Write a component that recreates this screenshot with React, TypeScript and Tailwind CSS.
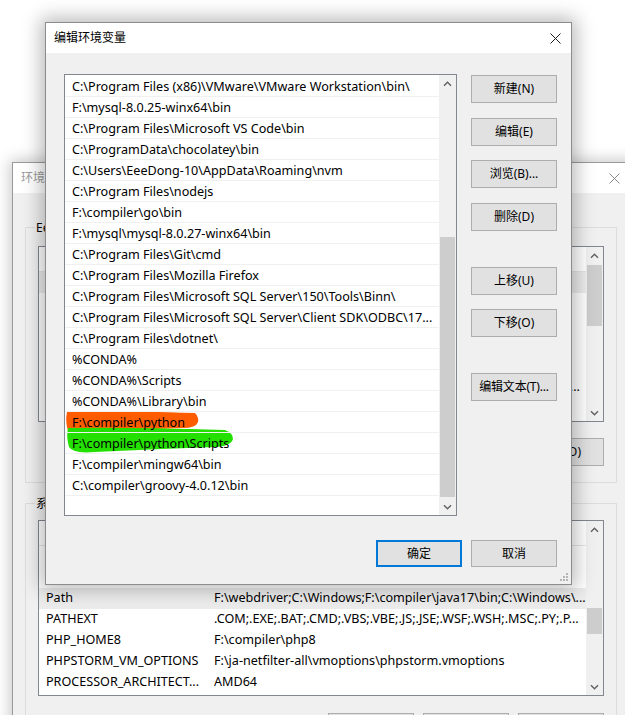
const editItems = [
    'C:\\Program Files (x86)\\VMware\\VMware Workstation\\bin\\',
    'F:\\mysql-8.0.25-winx64\\bin',
    'C:\\Program Files\\Microsoft VS Code\\bin',
    'C:\\ProgramData\\chocolatey\\bin',
    'C:\\Users\\EeeDong-10\\AppData\\Roaming\\nvm',
    'C:\\Program Files\\nodejs',
    'F:\\compiler\\go\\bin',
    'F:\\mysql\\mysql-8.0.27-winx64\\bin',
    'C:\\Program Files\\Git\\cmd',
    'C:\\Program Files\\Mozilla Firefox',
    'C:\\Program Files\\Microsoft SQL Server\\150\\Tools\\Binn\\',
    'C:\\Program Files\\Microsoft SQL Server\\Client SDK\\ODBC\\17...',
    'C:\\Program Files\\dotnet\\',
    '%CONDA%',
    '%CONDA%\\Scripts',
    '%CONDA%\\Library\\bin',
    'F:\\compiler\\python',
    'F:\\compiler\\python\\Scripts',
    'F:\\compiler\\mingw64\\bin',
    'C:\\compiler\\groovy-4.0.12\\bin',
];

// user variables sit behind the edit dialog; only the clipped tail of one value peeks out
const userVars: [string, string][] = [
    ['', ''],
    ['', ''],
    ['', ''],
    ['', ''],
    ['', ''],
    ['', '...'],
    ['', ''],
    ['', ''],
];

const sysVars: [string, string][] = [
    ['', ''],
    ['', ''],
    ['Path', 'F:\\webdriver;C:\\Windows;F:\\compiler\\java17\\bin;C:\\Windows\\...'],
    ['PATHEXT', '.COM;.EXE;.BAT;.CMD;.VBS;.VBE;.JS;.JSE;.WSF;.WSH;.MSC;.PY;.P...'],
    ['PHP_HOME8', 'F:\\compiler\\php8'],
    ['PHPSTORM_VM_OPTIONS', 'F:\\ja-netfilter-all\\vmoptions\\phpstorm.vmoptions'],
    ['PROCESSOR_ARCHITECT...', 'AMD64'],
];

function Chevron({ down = false }: { down?: boolean }) {
    return (
        <svg width="9" height="6" viewBox="0 0 9 6" className="text-[#606060]">
            <path d={down ? 'M1 1.2 L4.5 4.7 L8 1.2' : 'M1 4.8 L4.5 1.3 L8 4.8'} fill="none" stroke="currentColor" strokeWidth="1.4" />
        </svg>
    );
}

function ScrollBar({ thumb }: { thumb: string }) {
    return (
        <div className="flex w-[17px] shrink-0 flex-col bg-[#f0f0f0]">
            <div className="flex h-[17px] items-center justify-center">
                <Chevron />
            </div>
            <div className="flex-1">
                <div className={`mx-[1px] bg-[#cdcdcd] ${thumb}`} />
            </div>
            <div className="flex h-[17px] items-center justify-center">
                <Chevron down />
            </div>
        </div>
    );
}

function CloseX({ color }: { color: string }) {
    return (
        <svg width="11" height="11" viewBox="0 0 11 11" className={color}>
            <path d="M0.5 0.5 L10.5 10.5 M10.5 0.5 L0.5 10.5" stroke="currentColor" strokeWidth="1" />
        </svg>
    );
}

function WinButton({ label, className = '' }: { label: string; className?: string }) {
    return (
        <div className={`flex h-[28px] w-[86px] items-center justify-center border border-[#adadad] bg-[#e1e1e1] whitespace-nowrap ${className}`}>
            {label}
        </div>
    );
}

function VarList({ rows, selected, thumb }: { rows: [string, string][]; selected: number; thumb: string }) {
    return (
        <div className="flex h-[176px] border border-[#828790] bg-white">
            <div className="flex min-w-0 flex-1 flex-col overflow-hidden text-[12.6px]">
                <div className="h-[25px] shrink-0 border-b border-[#e5e5e5]" />
                {rows.map(([name, value], i) => (
                    <div key={i} className={`flex h-[21px] shrink-0 items-center ${i === selected ? 'bg-[#ececec]' : ''}`}>
                        <span className="w-[175px] shrink-0 overflow-hidden pl-[7px] whitespace-nowrap">{name}</span>
                        <span className={`min-w-0 flex-1 overflow-hidden whitespace-nowrap ${value === '...' ? 'pr-[6px] text-right' : ''}`}>{value}</span>
                    </div>
                ))}
            </div>
            <ScrollBar thumb={thumb} />
        </div>
    );
}

function BackgroundWindow() {
    return (
        <div className="absolute top-[162px] left-[12px] flex h-[600px] w-[640px] flex-col border border-[#9a9a9a] bg-[#f0f0f0] shadow-[0_0_14px_2px_rgba(0,0,0,0.22)]">
            <div className="flex h-[30px] shrink-0 items-center justify-between bg-white pr-[31px] pl-[8px] text-[#9a9a9a]">
                <span>环境变量</span>
                <CloseX color="text-[#8a8a8a]" />
            </div>

            <div className="relative mt-[34px] ml-[12px] w-[592px] border border-[#dcdcdc] px-[12px] pt-[18px] pb-[16px]">
                <span className="absolute -top-[9px] left-[9px] bg-[#f0f0f0] px-[1px]">Ee</span>
                <VarList rows={userVars} selected={0} thumb="mt-[1px] h-[61px]" />
                <div className="mt-[16px] flex justify-end gap-[9px]">
                    <WinButton label="" />
                    <WinButton label="" />
                    <WinButton label="删除(D)" />
                </div>
            </div>

            <div className="relative mt-[20px] ml-[12px] w-[592px] border border-[#dcdcdc] px-[12px] pt-[16px] pb-[16px]">
                <span className="absolute -top-[9px] left-[9px] bg-[#f0f0f0] px-[1px]">系</span>
                <VarList rows={sysVars} selected={2} thumb="mt-[70px] h-[26px]" />
                <div className="mt-[17px] flex justify-end gap-[9px]">
                    <WinButton label="" />
                    <WinButton label="" />
                    <WinButton label="" />
                </div>
            </div>
        </div>
    );
}

function EditDialog() {
    return (
        <div className="absolute top-[22px] left-[45px] flex h-[563px] w-[527px] flex-col border border-[#8c8c8c] bg-[#f0f0f0] shadow-[0_0_18px_4px_rgba(0,0,0,0.28)]">
            <div className="flex h-[30px] shrink-0 items-center justify-between bg-white pr-[10px] pl-[8px]">
                <span>编辑环境变量</span>
                <CloseX color="text-[#1a1a1a]" />
            </div>

            <div className="mt-[21px] flex pr-[13px] pl-[18px]">
                <div className="flex h-[442px] w-[393px] border border-[#828790] bg-white">
                    <div className="relative flex min-w-0 flex-1 flex-col overflow-hidden pt-[1px] text-[12.6px]">
                        <svg className="absolute top-0 left-0" width="374" height="440" viewBox="0 0 374 440">
                            <path d="M2 337 Q40 335 130 338 Q134 342 133 347 Q131 353 118 353 Q70 354 30 357 Q8 359 3 356 Q0 346 2 337 Z" fill="#ff5c00" />
                            <path d="M3 353 Q60 352 160 355 Q168 358 168 364 Q166 371 150 372 Q90 374 30 377 Q8 379 4 372 Q1 362 3 353 Z" fill="#24e000" />
                        </svg>
                        {editItems.map((item) => (
                            <div key={item} className="relative flex h-[21px] shrink-0 items-center border-b border-[#f0f0f0] pt-[2px] pl-[7px] whitespace-nowrap">
                                {item}
                            </div>
                        ))}
                    </div>
                    <ScrollBar thumb="mt-[145px] h-[260px]" />
                </div>

                <div className="mt-[1px] ml-[14px] flex flex-col">
                    <WinButton label="新建(N)" />
                    <WinButton label="编辑(E)" className="mt-[15px]" />
                    <WinButton label="浏览(B)..." className="mt-[14px]" />
                    <WinButton label="删除(D)" className="mt-[15px]" />
                    <WinButton label="上移(U)" className="mt-[36px]" />
                    <WinButton label="下移(O)" className="mt-[14px]" />
                    <WinButton label="编辑文本(T)..." className="mt-[36px] tracking-[-0.2px]" />
                </div>
            </div>

            <div className="mt-[24px] flex justify-end gap-[9px] pr-[14px]">
                <div className="flex h-[27px] w-[86px] items-center justify-center border-2 border-[#0078d7] bg-[#e1e1e1]">确定</div>
                <div className="flex h-[27px] w-[86px] items-center justify-center border border-[#adadad] bg-[#e1e1e1]">取消</div>
            </div>

            <svg className="absolute right-[2px] bottom-[2px]" width="10" height="10" viewBox="0 0 10 10">
                <g fill="#b5b5b5">
                    <rect x="7" y="1" width="2" height="2" />
                    <rect x="4" y="4" width="2" height="2" />
                    <rect x="7" y="4" width="2" height="2" />
                    <rect x="1" y="7" width="2" height="2" />
                    <rect x="4" y="7" width="2" height="2" />
                    <rect x="7" y="7" width="2" height="2" />
                </g>
            </svg>
        </div>
    );
}

export default function App() {
    return (
        <div className="relative h-[715px] w-[625px] overflow-hidden bg-white font-['Noto_Sans','Noto_Sans_CJK_SC',sans-serif] text-[12px] text-black">
            <BackgroundWindow />
            <EditDialog />
        </div>
    );
}
